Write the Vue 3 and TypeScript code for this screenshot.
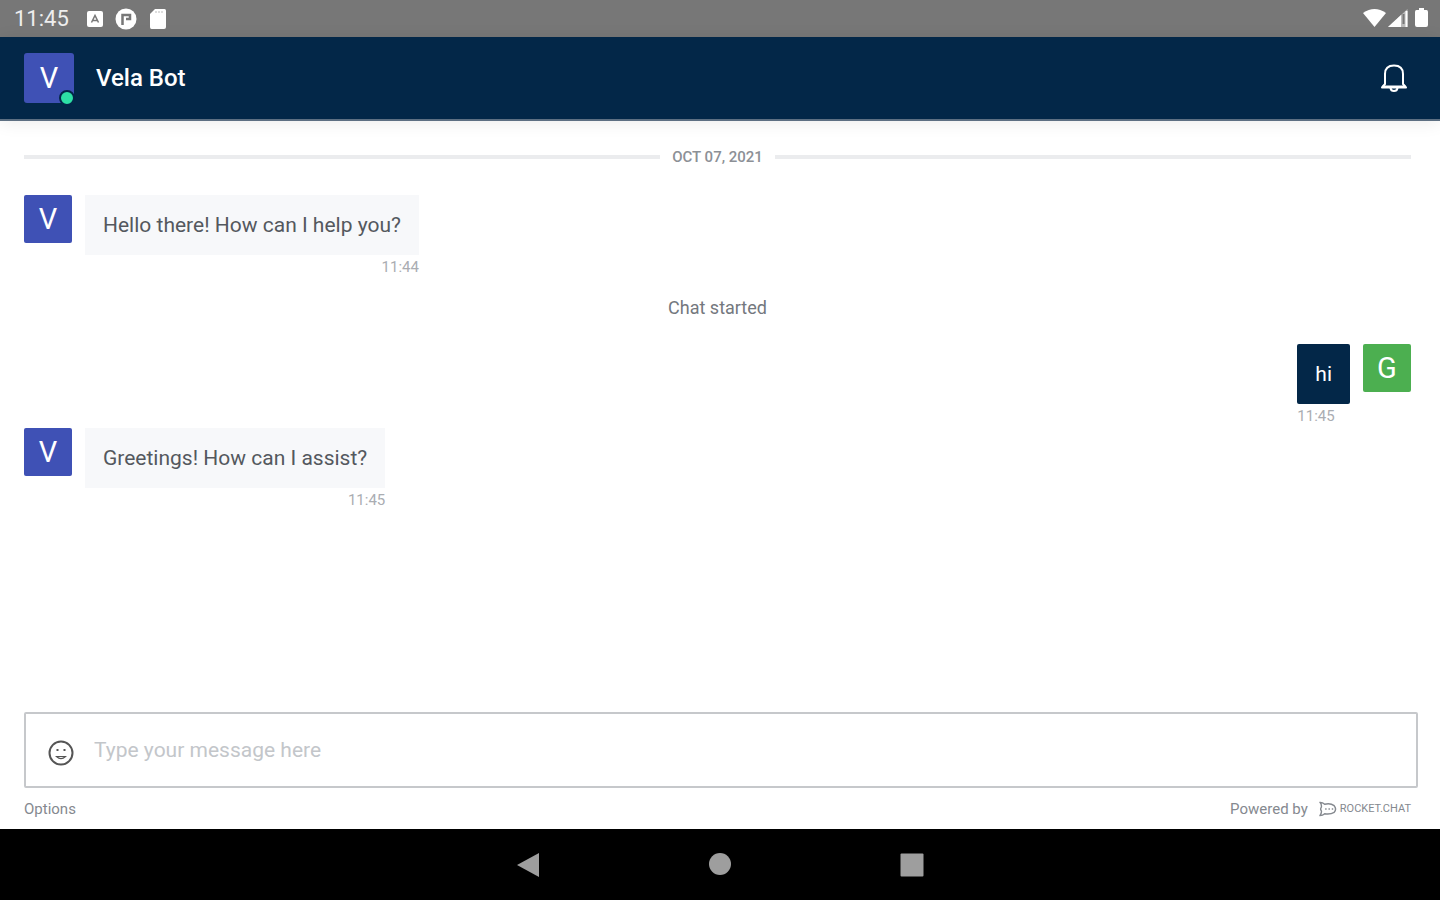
<script setup lang="ts">
import { ref } from 'vue'

interface Message {
  id: number
  kind: 'received' | 'sent' | 'system'
  text: string
  initial?: string
  time?: string
}

const messages: Message[] = [
  { id: 1, kind: 'received', text: 'Hello there! How can I help you?', initial: 'V', time: '11:44' },
  { id: 2, kind: 'system', text: 'Chat started' },
  { id: 3, kind: 'sent', text: 'hi', initial: 'G', time: '11:45' },
  { id: 4, kind: 'received', text: 'Greetings! How can I assist?', initial: 'V', time: '11:45' },
]

const draft = ref('')
</script>

<template>
  <div class="screen">
    <div class="status-bar">
      <span class="clock">11:45</span>
      <svg class="status-icon first" width="16" height="18" viewBox="0 0 16 18" aria-hidden="true">
        <rect x="0" y="1" width="16" height="16" rx="2" fill="#fff" />
        <path d="M4.500 12.500 8 5.500 11.500 12.500M6 10.500H10" fill="none" stroke="#777" stroke-width="1.500" />
      </svg>
      <svg class="status-icon" width="22" height="22" viewBox="0 0 22 22" aria-hidden="true">
        <circle cx="11" cy="11" r="10.500" fill="#fff" />
        <path d="M7.500 17V7H15V11H11" fill="none" stroke="#777" stroke-width="2.500" />
      </svg>
      <svg class="status-icon" width="18" height="20" viewBox="0 0 18 20" aria-hidden="true">
        <path d="M6 0H15.500Q17 0 17 1.500V18Q17 20 15 20H2.500Q1 20 1 18V5Z" fill="#fff" />
        <path d="M7 2V4M10 2V4M13 2V4" stroke="#bbb" stroke-width="1" />
      </svg>
      <span class="spacer"></span>
      <svg width="66" height="22" viewBox="0 0 66 22" aria-hidden="true">
        <path d="M0 5Q11.500-3 23 5L11.500 19Z" fill="#fff" />
        <path d="M44.500 1V19H25Z" fill="#bbb" />
        <path d="M38 7V19H25Z" fill="#fff" />
        <path d="M43.500 3V19" stroke="#fff" stroke-width="2" />
        <path d="M40.500 6V16" stroke="#777" stroke-width="2" />
        <path d="M56 0H61V2H63.500Q65 2 65 4V17Q65 19 63 19H54Q52 19 52 17V4Q52 2 53.500 2H56Z" fill="#fff" />
      </svg>
    </div>

    <header class="header">
      <div class="avatar header-avatar">V<span class="presence"></span></div>
      <h1 class="title">Vela Bot</h1>
      <button class="icon-button" type="button" aria-label="Notifications">
        <svg width="28" height="30" viewBox="0 0 28 30" fill="none" stroke="#fff" stroke-width="2" stroke-linejoin="round" stroke-linecap="round" aria-hidden="true">
          <path d="M5 21V11Q5 2.500 14 2.500T23 11V21L26 24.500H2Z" />
          <path d="M3 23.500H25" />
          <path d="M10.500 25Q11 28 14 28T17.500 25" />
        </svg>
      </button>
    </header>

    <main class="chat">
      <div class="date-separator"><span>OCT 07, 2021</span></div>
      <template v-for="message in messages" :key="message.id">
        <p v-if="message.kind === 'system'" class="system">{{ message.text }}</p>
        <article v-else class="message" :class="message.kind">
          <div class="avatar">{{ message.initial }}</div>
          <div class="content">
            <p class="bubble">{{ message.text }}</p>
            <time class="time">{{ message.time }}</time>
          </div>
        </article>
      </template>
    </main>

    <footer class="footer">
      <div class="composer">
        <button class="icon-button emoji" type="button" aria-label="Add emoji">
          <svg width="26" height="26" viewBox="0 0 26 26" fill="none" stroke="#555" stroke-width="2" aria-hidden="true">
            <circle cx="13" cy="13" r="11.500" />
            <path d="M8.500 16.500Q13 21 17.500 16.500Z" stroke-width="1.200" />
            <path d="M8.500 10H10.500M15.500 10H17.500" stroke-width="2" />
          </svg>
        </button>
        <input v-model="draft" class="field" type="text" aria-label="Message" placeholder="Type your message here" />
      </div>
      <div class="links">
        <button class="options" type="button">Options</button>
        <span class="spacer"></span>
        <span class="powered">Powered by</span>
        <a class="brand" href="#">
          <svg width="18" height="16" viewBox="0 0 19 16" fill="none" stroke="#85898f" stroke-width="1.500" stroke-linejoin="round" aria-hidden="true">
            <path d="M1 1Q4 1 6 3Q12 1.500 16 4.500Q19 8 16 11.500Q12 14 6 13Q4 15 1 15Q3 12 2.500 10Q1 8 2.500 6Q3 3 1 1Z" />
            <path d="M6.500 8H8M10 8H11.500M13.500 8H15" />
          </svg>
          <span>ROCKET.CHAT</span>
        </a>
      </div>
    </footer>

    <nav class="nav-bar" aria-label="System navigation">
      <button type="button" aria-label="Back">
        <svg width="24" height="26" viewBox="0 0 24 26" aria-hidden="true"><path d="M1 13 23 1V25Z" fill="#9e9e9e" /></svg>
      </button>
      <button type="button" aria-label="Home">
        <svg width="24" height="24" viewBox="0 0 24 24" aria-hidden="true"><circle cx="12" cy="11" r="11" fill="#9e9e9e" /></svg>
      </button>
      <button type="button" aria-label="Recent apps">
        <svg width="24" height="24" viewBox="0 0 24 24" aria-hidden="true"><rect x="0.500" y="0.500" width="23" height="23" rx="1" fill="#9e9e9e" /></svg>
      </button>
    </nav>
  </div>
</template>

<style>
body {
  margin: 0;
}
</style>

<style scoped>
.screen {
  display: flex;
  flex-direction: column;
  min-height: 100vh;
  background: #fff;
  color: #54585e;
  font-family: Roboto, "Liberation Sans", sans-serif;
}
.screen *,
.screen {
  box-sizing: border-box;
}
button {
  padding: 0;
  border: 0;
  background: none;
  font: inherit;
  color: inherit;
  cursor: pointer;
}
svg {
  display: block;
}
.spacer {
  flex: 1;
}
.status-bar {
  display: flex;
  align-items: center;
  height: 37px;
  padding: 0 11px 0 14px;
  background: #777;
  color: #eee;
}
.clock {
  font-size: 22px;
}
.status-icon {
  margin-left: 12px;
}
.status-icon.first {
  margin-left: 18px;
}
.header {
  display: flex;
  align-items: center;
  height: 84px;
  padding: 0 32px 0 24px;
  background: #032748;
  border-bottom: 2px solid #5d6f82;
  box-shadow: 0 2px 16px rgba(0, 0, 0, 0.08);
  color: #fff;
}
.avatar {
  display: flex;
  flex: none;
  align-items: center;
  justify-content: center;
  width: 48px;
  height: 48px;
  border-radius: 2px;
  background: #3f51b5;
  color: #fff;
  font-size: 29px;
}
.header-avatar {
  position: relative;
  width: 50px;
  height: 50px;
  border-radius: 3px;
}
.presence {
  position: absolute;
  right: -1px;
  bottom: -3px;
  width: 16px;
  height: 16px;
  border: 2px solid #032748;
  border-radius: 50%;
  background: #2de0a5;
}
.title {
  flex: 1;
  margin: 0 0 0 22px;
  font-size: 24px;
  font-weight: 500;
  line-height: 28px;
}
.chat {
  flex: 1;
  padding: 26px 29px 0 24px;
}
.date-separator {
  display: flex;
  align-items: center;
  gap: 12px;
  height: 20px;
  margin-bottom: 28px;
  color: #8c9096;
  font-size: 15px;
  font-weight: 500;
}
.date-separator::before,
.date-separator::after {
  content: "";
  flex: 1;
  height: 4px;
  background: #ebecee;
}
.message {
  display: flex;
  align-items: flex-start;
  gap: 13px;
}
.content {
  display: flex;
  flex-direction: column;
  align-items: flex-end;
}
.bubble {
  margin: 0;
  padding: 18px;
  background: #f7f8fa;
  font-size: 21px;
  line-height: 24px;
}
.time {
  height: 24px;
  color: #aaadb2;
  font-size: 15px;
  line-height: 24px;
}
.sent {
  flex-direction: row-reverse;
}
.sent .content {
  align-items: flex-start;
}
.sent .bubble {
  border-radius: 2px;
  background: #032748;
  color: #fff;
}
.sent .avatar {
  background: #4caf50;
}
.system {
  margin: 17px 0 24px;
  font-size: 18px;
  line-height: 24px;
  text-align: center;
  color: #74787e;
}
.footer {
  padding: 0 22px 0 24px;
}
.composer {
  display: flex;
  align-items: center;
  gap: 20px;
  height: 76px;
  padding: 0 22px;
  border: 2px solid #c6c8cb;
  border-radius: 2px;
}
.emoji {
  padding-top: 6px;
}
.field {
  flex: 1;
  min-width: 0;
  padding: 0;
  border: 0;
  outline: 0;
  background: none;
  color: inherit;
  font: inherit;
  font-size: 21px;
  line-height: 28px;
}
.field::placeholder {
  color: #c3c6ca;
  opacity: 1;
}
.links {
  display: flex;
  align-items: center;
  height: 41px;
  padding-right: 7px;
  color: #85898f;
  font-size: 15px;
}
.brand {
  display: flex;
  align-items: center;
  gap: 3px;
  margin-left: 11px;
  color: inherit;
  font-size: 11px;
  text-decoration: none;
}
.nav-bar {
  display: flex;
  align-items: center;
  justify-content: center;
  gap: 168px;
  height: 71px;
  background: #000;
}
</style>
